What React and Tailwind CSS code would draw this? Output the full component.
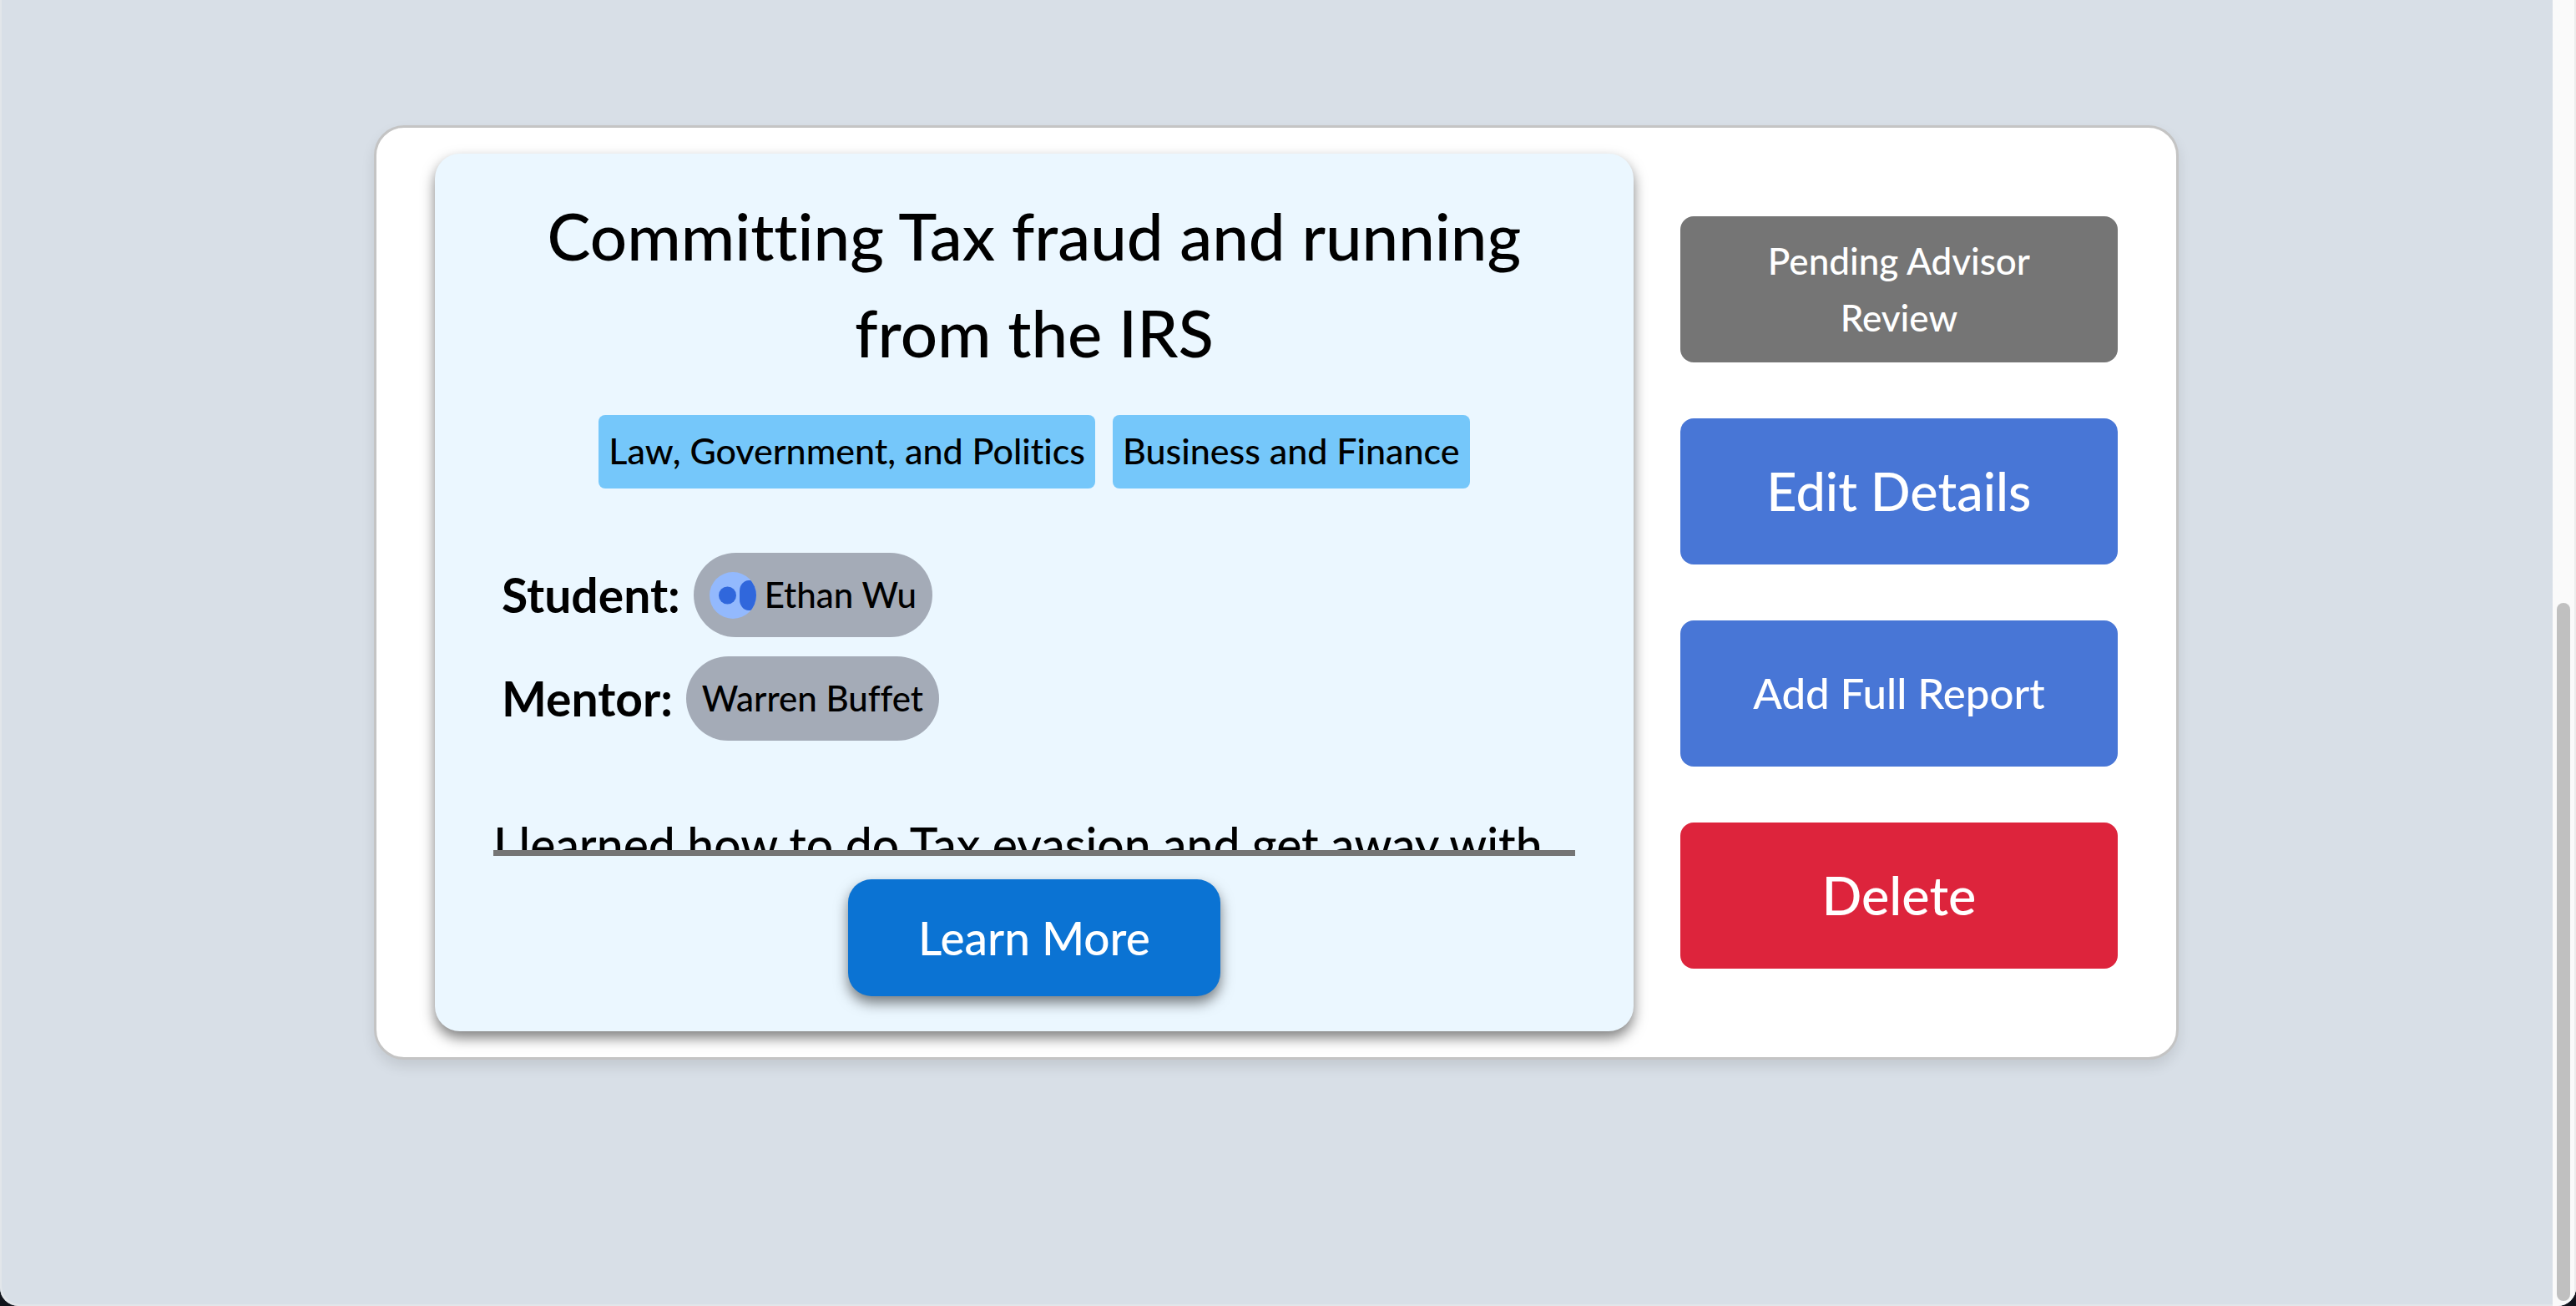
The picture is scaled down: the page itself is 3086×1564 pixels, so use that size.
import React from "react";

const tags = ["Law, Government, and Politics", "Business and Finance"];

const actions = [
  { label: "Pending Advisor Review", style: "bg-[#757575] text-[44px] leading-[68px]", disabled: true },
  { label: "Edit Details", style: "bg-[#4876d6] text-[63px] leading-[92px]" },
  { label: "Add Full Report", style: "bg-[#4876d6] text-[51px] leading-[76px]" },
  { label: "Delete", style: "bg-[#dd243c] text-[63px] leading-[92px]" },
];

function Avatar() {
  return (
    <svg viewBox="0 0 56 56" className="size-14" aria-hidden="true">
      <defs>
        <clipPath id="avatar-clip">
          <circle cx="28" cy="28" r="28" />
        </clipPath>
      </defs>
      <g clipPath="url(#avatar-clip)">
        <rect width="56" height="56" fill="#93b9fd" />
        <circle cx="21.5" cy="28" r="10.5" fill="#3067dc" />
        <rect x="36" y="10" width="24" height="36" rx="11" ry="13" fill="#3067dc" />
      </g>
    </svg>
  );
}

function Person({ role, name, avatar }) {
  return (
    <div className="flex items-center gap-4">
      <dt className="pb-0.5 text-[57px] leading-[86px] font-bold">{role}</dt>
      <dd className="flex h-[101px] items-center gap-2.5 rounded-full bg-[#a4abb7] px-[19px] text-[42px] leading-[64px]">
        {avatar}
        <span className="pb-0.5">{name}</span>
      </dd>
    </div>
  );
}

function ProjectCard() {
  return (
    <article className="flex flex-1 flex-col items-center rounded-[30px] bg-[#ebf7ff] px-[70px] pt-10 pb-[42px] shadow-[0_8px_16px_rgba(0,0,0,0.5)]">
      <h2 className="text-center text-[78px] leading-[116px]">
        Committing Tax fraud and running from the IRS
      </h2>
      <ul className="mt-[41px] flex flex-wrap justify-center gap-[21px]">
        {tags.map((tag) => (
          <li key={tag} className="rounded-lg bg-[#75c7fa] px-3 pt-[11px] pb-[13px] text-[43px] leading-[64px]">
            {tag}
          </li>
        ))}
      </ul>
      <dl className="mt-[77px] flex w-full flex-col gap-[23px] px-2.5">
        <Person role="Student:" name="Ethan Wu" avatar={<Avatar />} />
        <Person role="Mentor:" name="Warren Buffet" />
      </dl>
      <p className="mt-20 h-[58px] w-full overflow-hidden border-b-[7px] border-[#757575] text-[57px] leading-[88px]">
        I learned how to do Tax evasion and get away with
      </p>
      <button
        type="button"
        className="mt-7 rounded-[28px] bg-[#0b73d3] px-[84px] py-[27px] text-[55px] leading-[86px] text-white shadow-[0_8px_16px_rgba(0,0,0,0.5)]"
      >
        Learn More
      </button>
    </article>
  );
}

export default function App() {
  return (
    <div className="flex min-h-screen flex-col bg-[#11141c] font-['Lato',sans-serif] font-medium text-black [font-variant-ligatures:none]">
      <div className="flex flex-1 overflow-hidden rounded-b-[22px] bg-[#d8dfe7] shadow-[inset_2px_-2px_0_#e2e6ea]">
        <main className="flex-1">
          <section className="mx-auto mt-[150px] flex w-[71%] max-w-[2162px] items-center gap-14 rounded-[36px] border-[3px] border-[#c4c4c4] bg-white px-[70px] py-[31px] shadow-[0_8px_16px_rgba(0,0,0,0.1)]">
            <ProjectCard />
            <div className="flex w-[26%] flex-col gap-[67px]">
              {actions.map(({ label, style, disabled }) => (
                <button
                  key={label}
                  type="button"
                  disabled={disabled}
                  className={`h-[175px] rounded-2xl px-16 pb-0.5 text-white ${style}`}
                >
                  {label}
                </button>
              ))}
            </div>
          </section>
        </main>
        <div className="flex w-7 flex-col items-center border-r-2 border-[#ececec] bg-[#fafafa] pb-1.5" aria-hidden="true">
          <div className="h-[722px]" />
          <div className="w-4 flex-1 rounded-full bg-[#c0c0c0]" />
        </div>
      </div>
    </div>
  );
}
